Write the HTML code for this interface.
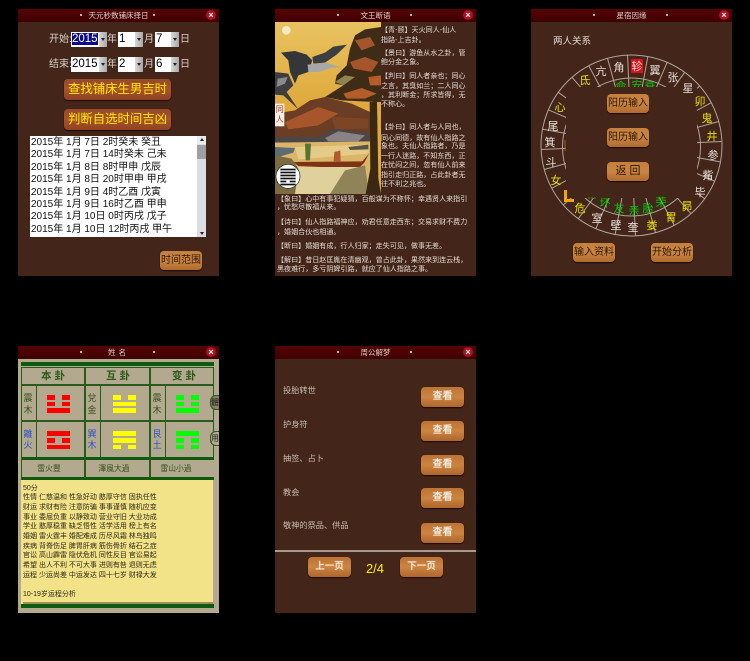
<!DOCTYPE html>
<html>
<head>
<meta charset="utf-8">
<style>
html,body{margin:0;padding:0;background:#000;}
body{position:relative;width:750px;height:661px;overflow:hidden;font-family:"Liberation Sans","Noto Sans CJK SC",sans-serif;}
.p{position:absolute;width:201px;height:267px;background:#43251a;overflow:hidden;}
.b{position:absolute;left:0;top:0;width:201px;height:13px;background:linear-gradient(#560405,#3f0000);}
.tt{position:absolute;left:0;top:0;width:201px;text-align:center;line-height:13px;font-size:7.5px;color:#d8cfc8;white-space:nowrap;}
.d{position:absolute;top:5px;width:2px;height:2px;background:#e8e0d8;border-radius:50%;}
.x{position:absolute;left:188px;top:1px;width:10px;height:10px;border-radius:50%;background:#b01020;color:#fff;font:bold 9px/10px "Liberation Sans",sans-serif;text-align:center;}
.t{position:absolute;white-space:nowrap;line-height:12px;}
.w{color:#d8d0c8;font-size:10px;}
.s{position:absolute;background:#fff;height:15px;color:#000;font-size:11.5px;line-height:15px;padding-left:1px;box-sizing:border-box;}
.s i{position:absolute;right:0;top:0;width:8px;height:15px;background:linear-gradient(90deg,#d8d8d8,#a8a8a8);}
.s i:after{content:"";position:absolute;left:2px;top:6px;border:2px solid transparent;border-top:3px solid #222;}
.btn{position:absolute;border-radius:4px;text-align:center;box-shadow:0 1px 1px #1c0c05;white-space:nowrap;}
.r{background:linear-gradient(#94492a,#a9532a 50%,#8c4122);color:#ffea00;font-size:12.4px;line-height:21px;width:107px;height:21px;left:46px;}
.o{background:linear-gradient(#c47f3c,#c98641 50%,#b0692f);color:#2e1608;font-size:10px;line-height:19px;width:42px;height:19px;}
.v{background:linear-gradient(#bd7433,#cc8440 50%,#ad652c);color:#f6efe4;font-size:10px;line-height:20px;width:43px;height:20px;text-shadow:0 0 1px #fff;}
.q{position:absolute;font-size:7.05px;line-height:10px;color:#e4dcd4;white-space:nowrap;}
.h{position:absolute;background:#2c5a1c;}
.l{position:absolute;font-size:9px;line-height:12px;width:14px;text-align:center;color:#33501c;}
.u{position:absolute;height:4.5px;}
.y{position:absolute;left:5px;font-size:7px;line-height:10px;color:#2e2818;white-space:nowrap;}
.m{position:absolute;left:8px;font-size:8.2px;line-height:12px;color:#c9bdb3;white-space:nowrap;}
</style>
</head>
<body>

<!-- Panel 1 -->
<div class="p" style="left:18px;top:9px;">
  <div class="b"></div><div class="tt">天元秒数铺床择日</div>
  <div class="d" style="left:62px"></div><div class="d" style="left:135px"></div>
  <div class="x">×</div>
  <div class="t w" style="left:31px;top:25px;">开始:</div>
  <div class="s" style="left:53px;top:23px;width:36px;"><span style="background:#0a0a8a;color:#fff;">2015</span><i></i></div>
  <div class="t w" style="left:89px;top:25px;">年</div>
  <div class="s" style="left:100px;top:23px;width:25px;">1<i></i></div>
  <div class="t w" style="left:126px;top:25px;">月</div>
  <div class="s" style="left:137px;top:23px;width:24px;">7<i></i></div>
  <div class="t w" style="left:162px;top:25px;">日</div>
  <div class="t w" style="left:31px;top:50px;">结束:</div>
  <div class="s" style="left:53px;top:48px;width:36px;">2015<i></i></div>
  <div class="t w" style="left:89px;top:50px;">年</div>
  <div class="s" style="left:100px;top:48px;width:25px;">2<i></i></div>
  <div class="t w" style="left:126px;top:50px;">月</div>
  <div class="s" style="left:137px;top:48px;width:24px;">6<i></i></div>
  <div class="t w" style="left:162px;top:50px;">日</div>
  <div class="btn r" style="top:70px;">查找铺床生男吉时</div>
  <div class="btn r" style="top:100px;">判断自选时间吉凶</div>
  <div style="position:absolute;left:12px;top:127px;width:176px;height:101px;background:#fff;overflow:hidden;font-size:10px;line-height:12.4px;color:#111;white-space:nowrap;">
    <div style="padding:1px 0 0 1px;">2015年 1月 7日 2时癸未 癸丑<br>2015年 1月 7日 14时癸未 己未<br>2015年 1月 8日 8时甲申 戊辰<br>2015年 1月 8日 20时甲申 甲戌<br>2015年 1月 9日 4时乙酉 戊寅<br>2015年 1月 9日 16时乙酉 甲申<br>2015年 1月 10日 0时丙戌 戊子<br>2015年 1月 10日 12时丙戌 甲午</div>
    <div style="position:absolute;right:0;top:0;width:9px;height:101px;background:#dcdce4;"></div>
    <div style="position:absolute;right:0;top:0;width:9px;height:8px;background:#ececec;"></div>
    <div style="position:absolute;right:0;top:9px;width:9px;height:14px;background:#a0a0a4;"></div>
    <div style="position:absolute;right:2px;top:2px;border:2.5px solid transparent;border-bottom:3px solid #222;border-top:0;"></div>
    <div style="position:absolute;right:2px;bottom:2px;border:2.5px solid transparent;border-top:3px solid #222;border-bottom:0;"></div>
  </div>
  <div class="btn o" style="left:142px;top:242px;">时间范围</div>
</div>

<!-- Panel 2 -->
<div class="p" style="left:275px;top:9px;">
  <div class="b"></div><div class="tt">文王断语</div>
  <div class="d" style="left:62px"></div><div class="d" style="left:135px"></div>
  <div class="x">×</div>
  <svg style="position:absolute;left:0;top:13px" width="106" height="172" viewBox="0 0 318 516">
    <defs><linearGradient id="sk" x1="0" y1="0" x2="0" y2="1"><stop offset="0" stop-color="#e8c260"/><stop offset="0.5" stop-color="#dfa93c"/><stop offset="1" stop-color="#dca83c"/></linearGradient></defs>
    <rect width="318" height="516" fill="url(#sk)"/>
    <circle cx="34" cy="25" r="13" fill="#f6ecc4"/>
    <!-- tree canopy -->
    <path d="M318 15 L270 22 L240 40 L225 80 L215 130 L185 160 L180 185 L205 190 L150 225 L200 235 L300 240 L318 240Z" fill="#3e2c16"/>
    <path d="M240 55 L285 45 L300 70 L260 85Z M225 120 L270 105 L310 120 L290 150 L235 140Z" fill="#a4552a"/>
    <path d="M280 165 L318 160 L318 190 L285 190Z M205 215 L260 198 L305 215 L270 230 L215 230Z" fill="#b55d28"/>
    <path d="M180 180 L210 160 L240 165 L205 190Z" fill="#8f8450"/>
    <!-- hills -->
    <path d="M0 290 L30 270 L60 265 L105 235 L150 225 L230 245 L285 270 L285 340 L0 350Z" fill="#6a3d24"/>
    <path d="M30 300 L130 255 L190 275 L130 310 L40 322Z" fill="#a7552a"/>
    <path d="M170 285 L280 290 L280 320 L180 322Z" fill="#7c4526"/>
    <path d="M0 345 L130 345 L180 320 L285 335 L285 360 L0 362Z" fill="#4d4648"/>
    <path d="M150 348 L190 328 L270 340 L250 358 L160 358Z" fill="#8a8284"/>
    <!-- water -->
    <path d="M0 362 L285 358 L285 516 L0 516Z" fill="#dcb668"/>
    <path d="M60 375 L280 368 L280 395 L70 412Z" fill="#e4cc88"/>
    <path d="M0 375 L60 378 L55 392 L10 405 L0 405Z" fill="#5d6c70"/>
    <path d="M220 375 L280 368 L280 382 L225 384Z" fill="#5a5446"/>
    <path d="M55 420 L262 418 L282 395 L268 422 L250 440 L70 432Z" fill="#7c3414"/>
    <path d="M90 365 L108 365 L105 415 L92 415Z" fill="#5a7230"/>
    <path d="M178 390 L196 385 L197 418 L176 418Z" fill="#b45a30"/>
    <path d="M60 435 L260 435 L280 516 L60 516Z" fill="#e0d09c"/>
    <path d="M0 400 L50 410 L70 440 L60 516 L0 516Z" fill="#7a6c40"/>
    <path d="M165 516 L210 445 L270 430 L282 516Z" fill="#8f8458"/>
    <path d="M284 240 L306 240 L310 470 L318 516 L272 516 L286 440Z" fill="#3a2812"/>
    <!-- goose -->
    <path d="M18 92 L60 87 L95 98 L112 115 L100 150 L70 160 L60 185 L45 150 L40 115Z" fill="#34363a"/>
    <path d="M112 105 L150 92 L175 74 L216 68 L185 98 L150 122 L115 125Z" fill="#3c3e42"/>
    <path d="M98 128 L150 122 L172 128 L200 136 L170 137 L130 150 L100 150Z" fill="#a8a8a8"/>
    <path d="M0 150 L40 155 L55 190 L35 210 L70 262 L25 220 L0 218Z" fill="#3e3e40"/>
    <path d="M8 170 L38 165 L30 185 L5 195Z" fill="#8a8a8c"/>
    <rect x="0" y="245" width="28" height="68" fill="#f5f0e4"/>
    <text x="14" y="270" font-size="24" fill="#b83020" text-anchor="middle">同</text>
    <text x="14" y="300" font-size="24" fill="#b83020" text-anchor="middle">人</text>
    <circle cx="39" cy="463" r="36" fill="#fff" stroke="#222" stroke-width="2"/>
    <rect x="16" y="440" width="46" height="5" fill="#111"/><rect x="16" y="449" width="46" height="5" fill="#111"/><rect x="16" y="458" width="46" height="5" fill="#111"/>
    <rect x="16" y="467" width="46" height="5" fill="#111"/><rect x="16" y="476" width="18" height="5" fill="#111"/><rect x="44" y="476" width="18" height="5" fill="#111"/><rect x="16" y="485" width="46" height="5" fill="#111"/>
  </svg>
  <div class="q" style="left:106px;top:17px;">【青-颐】天火同人-仙人</div>
  <div class="q" style="left:106px;top:27px;">指路-上吉卦。</div>
  <div class="q" style="left:106px;top:40px;">【景曰】游鱼从水之卦，管</div>
  <div class="q" style="left:106px;top:49px;">鲍分金之象。</div>
  <div class="q" style="left:106px;top:63px;">【判曰】同人者亲也；同心</div>
  <div class="q" style="left:106px;top:73px;">之言，其臭如兰；二人同心</div>
  <div class="q" style="left:106px;top:82px;">，其利断金；所求皆得，无</div>
  <div class="q" style="left:106px;top:91px;">不称心。</div>
  <div class="q" style="left:106px;top:114px;">【卦曰】同人者与人同也，</div>
  <div class="q" style="left:106px;top:125px;">同心同德，故有仙人指路之</div>
  <div class="q" style="left:106px;top:133px;">象也。夫仙人指路者，乃是</div>
  <div class="q" style="left:106px;top:143px;">一行人迷路，不知东西，正</div>
  <div class="q" style="left:106px;top:152px;">在忧闷之间，忽有仙人前来</div>
  <div class="q" style="left:106px;top:162px;">指引走归正路，占此卦者无</div>
  <div class="q" style="left:106px;top:171px;">往不利之兆也。</div>
  <div class="q" style="left:2px;top:186px;">【象曰】心中有事犯疑猜，百般谋为不称怀；幸遇贤人来指引</div>
  <div class="q" style="left:2px;top:194px;">，忧愁尽散福从来。</div>
  <div class="q" style="left:2px;top:209px;">【诗曰】仙人指路福神应，劝君任意走西东；交易求财不费力</div>
  <div class="q" style="left:2px;top:219px;">，婚姻合伙也相通。</div>
  <div class="q" style="left:2px;top:233px;">【断曰】婚姻有成，行人归家；走失可见，做事无差。</div>
  <div class="q" style="left:2px;top:247px;">【解曰】昔日赵匡胤在清幽观，曾占此卦，果然来到连云栈，</div>
  <div class="q" style="left:2px;top:256px;">黑夜难行，多亏阴婢引路，就应了仙人指路之事。</div>
</div>

<!-- Panel 3 -->
<div class="p" style="left:531px;top:9px;">
  <div class="b"></div><div class="tt">星宿因缘</div>
  <div class="d" style="left:62px"></div><div class="d" style="left:135px"></div>
  <div class="x">×</div>
  <div class="t" style="left:22px;top:27px;font-size:9.5px;color:#e0d8d0;">两人关系</div>
  <svg style="position:absolute;left:0;top:0" width="201" height="267" viewBox="531 9 201 267">
    <g fill="none" stroke="#b0a498" stroke-width="1">
      <circle cx="631.5" cy="145.5" r="90.5"/>
      <circle cx="631.5" cy="147" r="69"/>
      <g stroke-width="1">
        <line x1="631.5" y1="55" x2="631.5" y2="97" transform="rotate(-2.5 631.5 145.5)"/>
        <line x1="631.5" y1="55" x2="631.5" y2="97" transform="rotate(10.4 631.5 145.5)"/>
        <line x1="631.5" y1="55" x2="631.5" y2="97" transform="rotate(23.2 631.5 145.5)"/>
        <line x1="631.5" y1="55" x2="631.5" y2="97" transform="rotate(36 631.5 145.5)"/>
        <line x1="631.5" y1="55" x2="631.5" y2="97" transform="rotate(48.9 631.5 145.5)"/>
        <line x1="631.5" y1="55" x2="631.5" y2="97" transform="rotate(61.8 631.5 145.5)"/>
        <line x1="631.5" y1="55" x2="631.5" y2="97" transform="rotate(74.6 631.5 145.5)"/>
        <line x1="631.5" y1="55" x2="631.5" y2="97" transform="rotate(87.5 631.5 145.5)"/>
        <line x1="631.5" y1="55" x2="631.5" y2="97" transform="rotate(100.4 631.5 145.5)"/>
        <line x1="631.5" y1="55" x2="631.5" y2="97" transform="rotate(113.2 631.5 145.5)"/>
        <line x1="631.5" y1="55" x2="631.5" y2="97" transform="rotate(126 631.5 145.5)"/>
        <line x1="631.5" y1="55" x2="631.5" y2="97" transform="rotate(138.9 631.5 145.5)"/>
        <line x1="631.5" y1="55" x2="631.5" y2="97" transform="rotate(151.8 631.5 145.5)"/>
        <line x1="631.5" y1="55" x2="631.5" y2="97" transform="rotate(164.6 631.5 145.5)"/>
        <line x1="631.5" y1="55" x2="631.5" y2="97" transform="rotate(177.5 631.5 145.5)"/>
        <line x1="631.5" y1="55" x2="631.5" y2="97" transform="rotate(190.4 631.5 145.5)"/>
        <line x1="631.5" y1="55" x2="631.5" y2="97" transform="rotate(203.2 631.5 145.5)"/>
        <line x1="631.5" y1="55" x2="631.5" y2="97" transform="rotate(216 631.5 145.5)"/>
        <line x1="631.5" y1="55" x2="631.5" y2="97" transform="rotate(228.9 631.5 145.5)"/>
        <line x1="631.5" y1="55" x2="631.5" y2="97" transform="rotate(241.8 631.5 145.5)"/>
        <line x1="631.5" y1="55" x2="631.5" y2="97" transform="rotate(254.6 631.5 145.5)"/>
        <line x1="631.5" y1="55" x2="631.5" y2="97" transform="rotate(267.5 631.5 145.5)"/>
        <line x1="631.5" y1="55" x2="631.5" y2="97" transform="rotate(280.4 631.5 145.5)"/>
        <line x1="631.5" y1="55" x2="631.5" y2="97" transform="rotate(293.2 631.5 145.5)"/>
        <line x1="631.5" y1="55" x2="631.5" y2="97" transform="rotate(306 631.5 145.5)"/>
        <line x1="631.5" y1="55" x2="631.5" y2="97" transform="rotate(318.9 631.5 145.5)"/>
        <line x1="631.5" y1="55" x2="631.5" y2="97" transform="rotate(331.8 631.5 145.5)"/>
        <line x1="631.5" y1="55" x2="631.5" y2="97" transform="rotate(344.6 631.5 145.5)"/>
      </g>
    </g>
    <g font-size="11" text-anchor="middle" font-family="Liberation Sans,Noto Sans CJK SC,sans-serif">
      <g fill="#0c0">
        <text x="621" y="90">命</text><text x="637" y="89">安</text><text x="650" y="90">衰</text>
      </g>
      <rect x="566" y="87" width="131" height="111" fill="#43251a"/>
      <g fill="#e8e0d8">
        <text x="601" y="75">亢</text><text x="619" y="71">角</text><text x="655" y="74">翼</text><text x="673" y="81">张</text><text x="688" y="92">星</text>
        <text x="553" y="130">尾</text><text x="550" y="146">箕</text><text x="551" y="166">斗</text>
        <text x="597" y="222">室</text><text x="616" y="229">壁</text><text x="633" y="231">奎</text>
        <text x="713" y="159">参</text><text x="708" y="179">觜</text><text x="700" y="196">毕</text>
      </g>
      <rect x="631" y="59" width="12" height="14" fill="#e01018"/>
      <text x="637" y="70" fill="#f0e0e0">轸</text>
      <g fill="#e8e000">
        <text x="585" y="84">氐</text><text x="560" y="111">心</text><text x="556" y="184">女</text><text x="580" y="212">危</text>
        <text x="652" y="229">娄</text><text x="671" y="221">胃</text><text x="687" y="210">昴</text>
        <text x="700" y="105">卯</text><text x="707" y="122">鬼</text><text x="712" y="140">井</text>
      </g>
      <g fill="#0c0">
        <text x="605" y="207">坏</text><text x="619" y="212">友</text><text x="634" y="214">亲</text><text x="648" y="212">胎</text><text x="661" y="206">荣</text>
      </g>
    </g>
    <path d="M564 190 V202 H574 V199 H567 V190Z" fill="#f0a800"/>
    <line x1="588" y1="198" x2="597" y2="198" stroke="#0a0" stroke-dasharray="2 1"/>
    <line x1="565" y1="140" x2="565" y2="151" stroke="#9a6028"/>
  </svg>
  <div class="btn o" style="left:76px;top:85px;">阳历输入</div>
  <div class="btn o" style="left:76px;top:119px;">阳历输入</div>
  <div class="btn o" style="left:76px;top:153px;font-size:11px;">返 回</div>
  <div class="btn o" style="left:42px;top:234px;">输入资料</div>
  <div class="btn o" style="left:120px;top:234px;">开始分析</div>
</div>

<!-- Panel 4 -->
<div class="p" style="left:18px;top:346px;background:#b3a98e;">
  <div class="b"></div><div class="tt" style="letter-spacing:3px;">姓名</div>
  <div class="d" style="left:62px"></div><div class="d" style="left:135px"></div>
  <div class="x">×</div>
  <div class="h" style="left:3px;top:16px;width:193px;height:4px;background:#0e5a10;"></div>
  <div class="h" style="left:3px;top:21px;width:193px;height:1px;"></div>
  <div class="h" style="left:3px;top:38px;width:193px;height:2px;"></div>
  <div class="h" style="left:3px;top:74px;width:193px;height:1.5px;"></div>
  <div class="h" style="left:3px;top:111px;width:193px;height:3px;background:#0e5a10;"></div>
  <div class="h" style="left:3px;top:131px;width:193px;height:3px;background:#0e5a10;"></div>
  <div class="h" style="left:3px;top:21px;width:1px;height:111px;"></div>
  <div class="h" style="left:66px;top:21px;width:2px;height:111px;"></div>
  <div class="h" style="left:131px;top:21px;width:2px;height:111px;"></div>
  <div class="h" style="left:195px;top:21px;width:1px;height:90px;"></div>
  <div class="h" style="left:18px;top:39px;width:1px;height:72px;"></div>
  <div class="h" style="left:82px;top:39px;width:1px;height:72px;"></div>
  <div class="h" style="left:147px;top:39px;width:1px;height:72px;"></div>

  <div class="t" style="left:10px;width:50px;text-align:center;top:24px;font-size:10.5px;font-weight:bold;color:#2c5a1c;">本 卦</div>
  <div class="t" style="left:75px;width:50px;text-align:center;top:24px;font-size:10.5px;font-weight:bold;color:#2c5a1c;">互 卦</div>
  <div class="t" style="left:141px;width:50px;text-align:center;top:24px;font-size:10.5px;font-weight:bold;color:#2c5a1c;">变 卦</div>

  <div class="l" style="left:3px;top:46px;">震</div><div class="l" style="left:3px;top:58px;">木</div>
  <div class="l" style="left:3px;top:82px;color:#2a50d0;">離</div><div class="l" style="left:3px;top:93px;color:#2a50d0;">火</div>
  <div class="l" style="left:67px;top:46px;">兌</div><div class="l" style="left:67px;top:58px;">金</div>
  <div class="l" style="left:67px;top:82px;color:#2a50d0;">巽</div><div class="l" style="left:67px;top:93px;color:#2a50d0;">木</div>
  <div class="l" style="left:132px;top:46px;">震</div><div class="l" style="left:132px;top:58px;">木</div>
  <div class="l" style="left:132px;top:82px;color:#2a50d0;">艮</div><div class="l" style="left:132px;top:93px;color:#2a50d0;">土</div>

  <!-- red -->
  <div class="u" style="left:29px;top:49px;width:8px;background:#f00;"></div><div class="u" style="left:44px;top:49px;width:8px;background:#f00;"></div>
  <div class="u" style="left:29px;top:55.5px;width:8px;background:#f00;"></div><div class="u" style="left:44px;top:55.5px;width:8px;background:#f00;"></div>
  <div class="u" style="left:29px;top:62px;width:23px;background:#f00;"></div>
  <div class="u" style="left:29px;top:85px;width:23px;background:#f00;"></div>
  <div class="u" style="left:29px;top:92px;width:8px;background:#f00;"></div><div class="u" style="left:44px;top:92px;width:8px;background:#f00;"></div>
  <div class="u" style="left:29px;top:98.5px;width:23px;background:#f00;"></div>
  <!-- yellow -->
  <div class="u" style="left:95px;top:49px;width:8px;background:#ff0;"></div><div class="u" style="left:110px;top:49px;width:8px;background:#ff0;"></div>
  <div class="u" style="left:95px;top:55.5px;width:23px;background:#ff0;"></div>
  <div class="u" style="left:95px;top:62px;width:23px;background:#ff0;"></div>
  <div class="u" style="left:95px;top:85px;width:23px;background:#ff0;"></div>
  <div class="u" style="left:95px;top:92px;width:23px;background:#ff0;"></div>
  <div class="u" style="left:95px;top:98.5px;width:8px;background:#ff0;"></div><div class="u" style="left:110px;top:98.5px;width:8px;background:#ff0;"></div>
  <!-- green -->
  <div class="u" style="left:158px;top:49px;width:8px;background:#0f0;"></div><div class="u" style="left:173px;top:49px;width:8px;background:#0f0;"></div>
  <div class="u" style="left:158px;top:55.5px;width:8px;background:#0f0;"></div><div class="u" style="left:173px;top:55.5px;width:8px;background:#0f0;"></div>
  <div class="u" style="left:158px;top:62px;width:23px;background:#0f0;"></div>
  <div class="u" style="left:158px;top:85px;width:23px;background:#0f0;"></div>
  <div class="u" style="left:158px;top:92px;width:8px;background:#0f0;"></div><div class="u" style="left:173px;top:92px;width:8px;background:#0f0;"></div>
  <div class="u" style="left:158px;top:98.5px;width:8px;background:#0f0;"></div><div class="u" style="left:173px;top:98.5px;width:8px;background:#0f0;"></div>

  <!-- side tabs -->
  <div style="position:absolute;left:192px;top:49px;width:10px;height:15px;border:1px solid #2c5a1c;border-right:0;border-radius:6px 0 0 6px;background:#8a8068;box-sizing:border-box;font-size:8px;line-height:13px;color:#222;">體</div>
  <div style="position:absolute;left:192px;top:85px;width:10px;height:15px;border:1px solid #2c5a1c;border-right:0;border-radius:6px 0 0 6px;background:#b3a98e;box-sizing:border-box;font-size:8px;line-height:13px;color:#222;">用</div>

  <div class="t" style="left:3px;width:56px;text-align:center;top:117px;font-size:7.8px;color:#33501c;">雷火豐</div>
  <div class="t" style="left:68px;width:56px;text-align:center;top:117px;font-size:7.8px;color:#33501c;">澤風大過</div>
  <div class="t" style="left:133px;width:50px;text-align:center;top:117px;font-size:7.8px;color:#33501c;">雷山小過</div>

  <div style="position:absolute;left:3px;top:134px;width:192px;height:124px;background:#f2e288;"></div>
  <div class="y" style="top:138px;">50分</div>
  <div class="y" style="top:147px;">性情 仁慈温和 性急好动 憨厚守信 固执任性</div>
  <div class="y" style="top:157px;">财运 求财有险 注意防骗 事事谨慎 随机应变</div>
  <div class="y" style="top:167px;">事业 委屈负重 以静致动 营业守旧 大业功成</div>
  <div class="y" style="top:176px;">学业 憨厚稳重 缺乏悟性 活学活用 榜上有名</div>
  <div class="y" style="top:186px;">婚姻 雷火霆丰 婚配难成 历尽风霜 林鸟独鸣</div>
  <div class="y" style="top:196px;">疾病 背脊伤足 脾胃肝病 筋伤骨折 结石之症</div>
  <div class="y" style="top:205px;">官讼 高山霹雷 隐伏危机 同性反目 官讼易起</div>
  <div class="y" style="top:215px;">希望 出人不利 不可大事 进则有咎 退则无虑</div>
  <div class="y" style="top:225px;">运程 少运尚差 中运发达 四十七岁 财禄大发</div>
  <div class="y" style="top:244px;">10-19岁运程分析</div>
  <div style="position:absolute;left:5px;top:256px;width:190px;height:2px;background:#9a9058;"></div>
  <div class="h" style="left:3px;top:258px;width:193px;height:4px;background:#0e5a10;"></div>
</div>

<!-- Panel 5 -->
<div class="p" style="left:275px;top:346px;">
  <div class="b"></div><div class="tt">周公解梦</div>
  <div class="d" style="left:62px"></div><div class="d" style="left:135px"></div>
  <div class="x">×</div>
  <div class="m" style="top:39px;">投胎转世</div>
  <div class="m" style="top:73px;">护身符</div>
  <div class="m" style="top:107px;">抽签、占卜</div>
  <div class="m" style="top:141px;">教会</div>
  <div class="m" style="top:174px;">敬神的祭品、供品</div>
  <div class="btn v" style="left:146px;top:41px;">查看</div>
  <div class="btn v" style="left:146px;top:75px;">查看</div>
  <div class="btn v" style="left:146px;top:109px;">查看</div>
  <div class="btn v" style="left:146px;top:142px;">查看</div>
  <div class="btn v" style="left:146px;top:177px;">查看</div>
  <div style="position:absolute;left:0;top:204px;width:201px;height:2px;background:#a89a90;"></div>
  <div class="btn v" style="left:33px;top:211px;font-size:9.5px;">上一页</div>
  <div class="t" style="left:79px;width:42px;text-align:center;top:217px;font-size:13px;color:#ffee00;">2/4</div>
  <div class="btn v" style="left:125px;top:211px;font-size:9.5px;">下一页</div>
</div>

</body>
</html>
